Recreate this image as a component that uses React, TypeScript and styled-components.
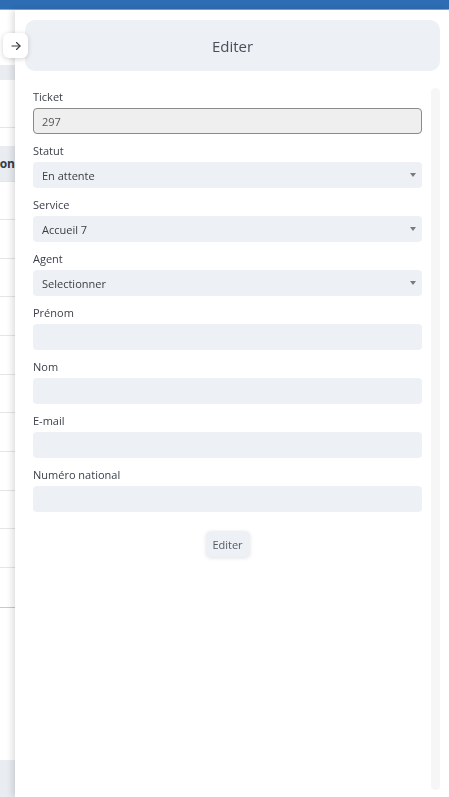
import React from "react";
import styled, { createGlobalStyle } from "styled-components";

const GlobalStyle = createGlobalStyle`
  html, body { margin: 0; padding: 0; height: 100%; overflow: hidden; background: #ffffff; }
  body { font-family: "Open Sans", "Noto Sans", sans-serif; }
  * { box-sizing: border-box; }
`;

const TopBar = styled.div`
  height: 10px;
  background: #2e6cb3;
  border-bottom: 1px solid #7fa6d6;
`;

const BgPage = styled.div`
  display: flex;
  flex-direction: column;
  padding-top: 55px;
`;

const BgRow = styled.div<{ $band?: boolean; $h: number; $line?: string }>`
  height: ${(p) => p.$h}px;
  background: ${(p) => (p.$band ? "#e9ecf0" : "#ffffff")};
  border-bottom: 1px solid ${(p) => p.$line || "#e6e6e6"};
  width: 15px;
  overflow: hidden;
  display: flex;
  align-items: center;
  justify-content: flex-end;
  white-space: nowrap;
  font-family: "Open Sans", sans-serif;
  font-weight: 700;
  font-size: 12px;
  color: #333a45;
`;

const Spacer = styled.div<{ $h: number }>`
  height: ${(p) => p.$h}px;
  width: 15px;
`;

const Drawer = styled.aside`
  position: fixed;
  top: 10px;
  left: 15px;
  right: 0;
  bottom: 0;
  background: #ffffff;
  box-shadow: -3px 0 6px rgba(0, 0, 0, 0.12);
  padding: 10px 9px 0 10px;
  display: flex;
  flex-direction: column;
`;

const CloseButton = styled.button`
  position: absolute;
  left: -12px;
  top: 23px;
  width: 25px;
  height: 25px;
  border: none;
  border-radius: 6px;
  background: #ffffff;
  box-shadow: 0 1px 5px rgba(0, 0, 0, 0.18);
  display: flex;
  align-items: center;
  justify-content: center;
  padding: 0;
  color: #333;
`;

const HeaderCard = styled.div`
  height: 51px;
  border-radius: 10px;
  background: #edf0f5;
  display: flex;
  align-items: center;
  justify-content: center;
  font-size: 15px;
  color: #4a4e5b;
  padding-top: 1px;
`;

const Body = styled.div`
  flex: 1;
  display: flex;
  gap: 9px;
  margin-top: 17px;
  padding-left: 8px;
  padding-bottom: 7px;
`;

const Form = styled.form`
  flex: 1;
  padding-top: 2px;
  display: flex;
  flex-direction: column;
`;

const Field = styled.div`
  display: flex;
  flex-direction: column;
  margin-bottom: 10px;
`;

const Label = styled.label`
  font-size: 11px;
  line-height: 14px;
  font-weight: 500;
  color: #3b404b;
  margin-bottom: 4px;
`;

const TextBox = styled.div<{ $readonly?: boolean }>`
  height: 26px;
  border-radius: 4px;
  background: ${(p) => (p.$readonly ? "#efefef" : "#edf0f5")};
  border: ${(p) => (p.$readonly ? "1px solid #8a8a8a" : "none")};
  display: flex;
  align-items: center;
  padding: 0 ${(p) => (p.$readonly ? "8px" : "9px")};
  font-size: 11px;
  color: ${(p) => (p.$readonly ? "#555" : "#3a3d44")};
`;

const SelectBox = styled(TextBox)`
  justify-content: space-between;
  padding-right: 6px;
`;

const Caret = styled.span`
  width: 0;
  height: 0;
  border-left: 3px solid transparent;
  border-right: 3px solid transparent;
  border-top: 4px solid #7a7a7a;
`;

const Actions = styled.div`
  display: flex;
  justify-content: center;
  margin-top: 9px;
`;

const SubmitButton = styled.button`
  width: 44px;
  height: 26px;
  border: none;
  border-radius: 5px;
  background: #edf0f5;
  box-shadow: 0 1px 4px rgba(0, 0, 0, 0.12);
  font-family: "Open Sans", sans-serif;
  font-size: 11px;
  color: #555a66;
  padding: 0;
`;

const ScrollTrack = styled.div`
  width: 9px;
  border-radius: 5px;
  background: #f6f6f6;
`;

type FieldDef = { label: string; value?: string; kind: "readonly" | "select" | "text" };

const fields: FieldDef[] = [
  { label: "Ticket", value: "297", kind: "readonly" },
  { label: "Statut", value: "En attente", kind: "select" },
  { label: "Service", value: "Accueil 7", kind: "select" },
  { label: "Agent", value: "Selectionner", kind: "select" },
  { label: "Prénom", kind: "text" },
  { label: "Nom", kind: "text" },
  { label: "E-mail", kind: "text" },
  { label: "Numéro national", kind: "text" },
];

const bgRowHeights = [38, 39, 38, 39, 39, 38, 39, 39, 38, 39, 40];

export default function App() {
  return (
    <>
      <GlobalStyle />
      <TopBar />
      <BgPage>
        <BgRow $band $h={15} $line="#e9ecf0" />
        <BgRow $h={48} />
        <Spacer $h={18} />
        <BgRow $band $h={36}>Information</BgRow>
        {bgRowHeights.map((h, i) => (
          <BgRow
            key={i}
            $h={h}
            $line={i === bgRowHeights.length - 1 ? "#c9c9c9" : "#e6e6e6"}
          />
        ))}
        <Spacer $h={152} />
        <BgRow $band $h={40} $line="#dde1e7" />
      </BgPage>
      <Drawer>
        <CloseButton aria-label="Fermer">
          <svg width="12" height="12" viewBox="0 0 24 24" fill="none" stroke="#3a3a3a" strokeWidth="2.2" strokeLinecap="round" strokeLinejoin="round">
            <path d="M4 12h16" />
            <path d="M13 5l7 7-7 7" />
          </svg>
        </CloseButton>
        <HeaderCard>Editer</HeaderCard>
        <Body>
          <Form onSubmit={(e) => e.preventDefault()}>
            {fields.map((f) => (
              <Field key={f.label}>
                <Label>{f.label}</Label>
                {f.kind === "readonly" && <TextBox $readonly>{f.value}</TextBox>}
                {f.kind === "select" && (
                  <SelectBox>
                    <span>{f.value}</span>
                    <Caret />
                  </SelectBox>
                )}
                {f.kind === "text" && <TextBox />}
              </Field>
            ))}
            <Actions>
              <SubmitButton type="submit">Editer</SubmitButton>
            </Actions>
          </Form>
          <ScrollTrack />
        </Body>
      </Drawer>
    </>
  );
}
